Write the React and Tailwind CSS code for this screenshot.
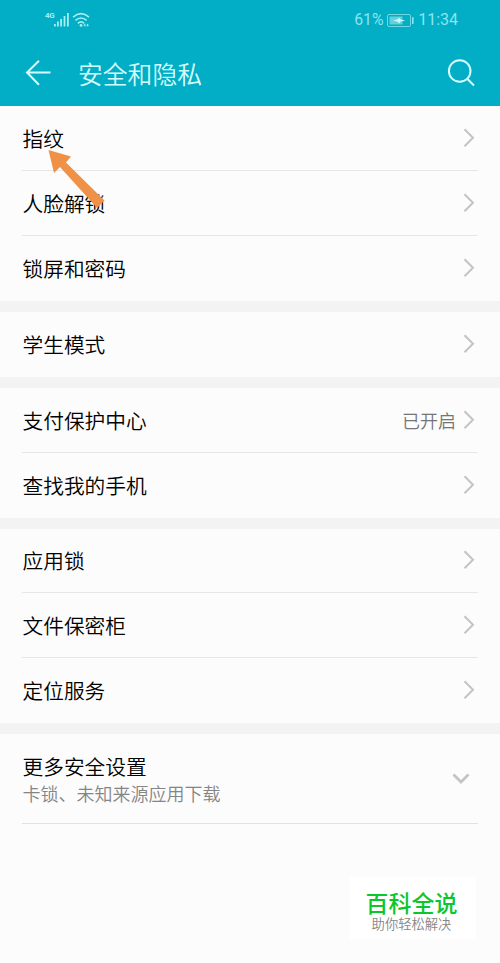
const GROUPS = [
  [{ label: '指纹' }, { label: '人脸解锁' }, { label: '锁屏和密码' }],
  [{ label: '学生模式' }],
  [{ label: '支付保护中心', value: '已开启' }, { label: '查找我的手机' }],
  [{ label: '应用锁' }, { label: '文件保密柜' }, { label: '定位服务' }],
];

function ChevronRight() {
  return (
    <svg className="h-5 w-3 shrink-0" viewBox="0 0 12 20" fill="none" stroke="#c4c4c4" strokeWidth="2">
      <path d="M1.5 1.2 L10 9.8 L1.5 18.3" />
    </svg>
  );
}

function StatusBar() {
  return (
    <div className="flex h-10 items-center justify-between pr-[42px] pl-[45px] text-[#a5eef2]">
      <div className="flex items-start">
        <span className="w-[9px] font-['Roboto',sans-serif] text-[8px] leading-[8px] font-bold tracking-tighter">4G</span>
        <svg className="h-4 w-[17px]" viewBox="0 0 17 16" fill="currentColor">
          <rect x="0" y="12" width="1.8" height="2.5" />
          <rect x="3" y="9.5" width="1.8" height="5" />
          <rect x="6.2" y="7" width="1.8" height="7.5" />
          <rect x="9.6" y="4" width="1.8" height="10.5" />
          <rect x="13" y="1" width="1.8" height="13.5" />
        </svg>
        <svg className="ml-[1px] h-4 w-[18px]" viewBox="0 0 18 16" fill="none" stroke="currentColor" strokeWidth="1.6">
          <path d="M1 5.2 Q9 -1.8 17 5.2" />
          <path d="M3.4 8.4 Q9 3.6 14.6 8.4" />
          <path d="M5.8 11.3 Q9 8.4 12.2 11.3" />
          <circle cx="9" cy="13.4" r="1.4" fill="currentColor" stroke="none" />
          <path d="M11.2 13.2 l2.2 -1.6 v3.2z M17 13.2 l-2.2 -1.6 v3.2z" fill="currentColor" stroke="none" />
        </svg>
      </div>
      <div className="flex items-center font-[Roboto,sans-serif] text-base leading-5 text-[#8ae5ec]">
        <span className="w-[32px] text-[15.8px]">61%</span>
        <svg className="h-[15px] w-[29px]" viewBox="0 0 29 15" fill="none">
          <rect x="1.5" y="1.5" width="23" height="12" rx="1.5" stroke="#6fd8e2" strokeWidth="1" />
          <rect x="3.5" y="3.5" width="13" height="8" fill="#65d0db" />
          <rect x="26" y="4" width="1.6" height="7" rx="0.6" fill="#8ae5ec" />
          <path d="M7 7.5 L12 6.2 L13 4.5 L14.5 6.5 L19.5 7.5 L14.5 8.5 L13 10.5 L12 8.8z" fill="#c4ffff" />
        </svg>
        <span className="ml-[3px]">11:34</span>
      </div>
    </div>
  );
}

function Header() {
  return (
    <header className="h-[106px] bg-[#02adc6]">
      <StatusBar />
      <div className="flex h-[66px] items-center pr-[25px] pl-[25px] text-[#d5ffff]">
        <svg className="h-[26px] w-[26px]" viewBox="0 0 26 26" fill="none" stroke="currentColor" strokeWidth="2">
          <path d="M25.5 12.5 H2 M14 0.8 L2 12.5 L14 24.8" />
        </svg>
        <h1 className="ml-[27px] flex-1 text-[24.8px] leading-8 font-[350]">安全和隐私</h1>
        <svg className="h-7 w-7" viewBox="0 0 28 28" fill="none" stroke="currentColor" strokeWidth="2">
          <circle cx="12.7" cy="12" r="10.8" />
          <path d="M20.2 19.7 L27 26.5" />
        </svg>
      </div>
    </header>
  );
}

function Row({ label, value, last }) {
  return (
    <div className="mx-[22px]">
      <div
        className={
          'flex h-[65px] items-center border-b pr-[3px] pl-[0.5px] ' +
          (last ? 'border-transparent' : 'border-[#e6e6e6]')
        }
      >
        <span className="flex-1 pb-px text-[20.7px] leading-7 font-[350] text-black">{label}</span>
        {value && <span className="mr-[7px] text-[18px] leading-6 font-[350] text-[#757575]">{value}</span>}
        <ChevronRight />
      </div>
    </div>
  );
}

export default function App() {
  return (
    <div className="relative flex h-[963px] w-[500px] flex-col overflow-hidden bg-[#fcfcfc] font-['Noto_Sans_CJK_SC',sans-serif]">
      <Header />
      {GROUPS.map((group, i) => (
        <section key={i} className={'border-b-[11px] border-[#f3f3f3] ' + (i === 3 ? '-mt-px' : '')}>
          {group.map((row, j) => (
            <Row key={row.label} {...row} last={j === group.length - 1} />
          ))}
        </section>
      ))}
      <section className="mx-[22px] flex h-[90px] items-center border-b border-[#e2e2e2] pr-2 pl-[0.5px]">
        <div className="flex-1">
          <div className="text-[20.7px] leading-7 font-[350] text-black">更多安全设置</div>
          <div className="text-[18px] leading-[26px] font-[350] text-[#858585]">卡锁、未知来源应用下载</div>
        </div>
        <svg className="h-3 w-[18px]" viewBox="0 0 18 12" fill="none" stroke="#c4c4c4" strokeWidth="2.8">
          <path d="M1.5 1.5 L9 9 L16.5 1.5" />
        </svg>
      </section>
      <div className="mt-[53px] ml-[350px] flex h-[62px] w-[126px] flex-col items-center bg-white pr-[3px]">
        <div className="mt-[12px] text-[23px] leading-[26px] font-medium text-[#0cc62e]">百科全说</div>
        <div className="text-[13.3px] leading-[18px] font-[350] text-[#858585]">助你轻松解决</div>
      </div>
      <svg className="absolute top-[148px] left-[46px] h-[64px] w-[62px]" viewBox="46 148 62 64" fill="#f09148">
        <path d="M48.5 150 L71 156.5 L66 162.5 L104.5 200.5 L97 208 L60 167 L54 173z" />
      </svg>
    </div>
  );
}
